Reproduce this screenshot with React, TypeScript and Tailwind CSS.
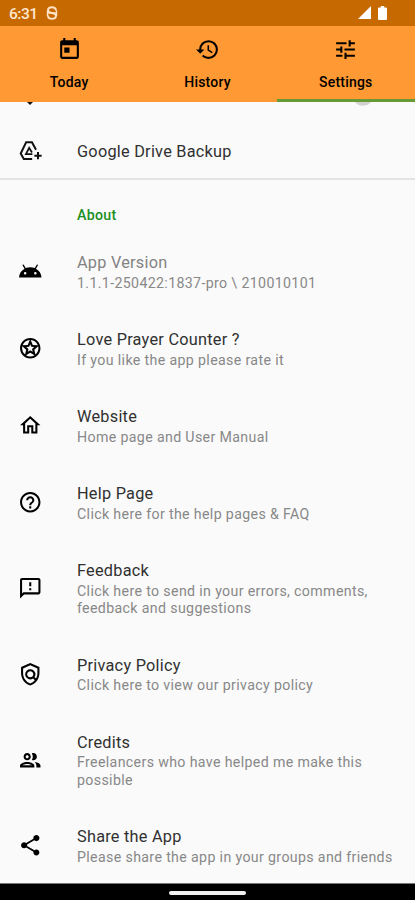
import type { IconType } from 'react-icons';
import {
  MdAndroid,
  MdHelpOutline,
  MdHistory,
  MdOutlineFeedback,
  MdOutlineGroup,
  MdOutlineHome,
  MdOutlinePolicy,
  MdOutlineStars,
  MdShare,
  MdToday,
  MdTune,
} from 'react-icons/md';

type Tab = {
  label: string;
  icon: IconType;
  active?: boolean;
};

type Preference = {
  title: string;
  summary: string[];
  icon: IconType;
  disabled?: boolean;
};

const tabs: Tab[] = [
  { label: 'Today', icon: MdToday },
  { label: 'History', icon: MdHistory },
  { label: 'Settings', icon: MdTune, active: true },
];

const aboutItems: Preference[] = [
  { title: 'App Version', summary: ['1.1.1-250422:1837-pro \\ 210010101'], icon: MdAndroid, disabled: true },
  { title: 'Love Prayer Counter ?', summary: ['If you like the app please rate it'], icon: MdOutlineStars },
  { title: 'Website', summary: ['Home page and User Manual'], icon: MdOutlineHome },
  { title: 'Help Page', summary: ['Click here for the help pages & FAQ'], icon: MdHelpOutline },
  {
    title: 'Feedback',
    summary: ['Click here to send in your errors, comments,', 'feedback and suggestions'],
    icon: MdOutlineFeedback,
  },
  { title: 'Privacy Policy', summary: ['Click here to view our privacy policy'], icon: MdOutlinePolicy },
  { title: 'Credits', summary: ['Freelancers who have helped me make this', 'possible'], icon: MdOutlineGroup },
  { title: 'Share the App', summary: ['Please share the app in your groups and friends'], icon: MdShare },
];

function StatusBar() {
  return (
    <div className="flex h-[25.5px] shrink-0 items-center bg-[#c66900] pl-[9px] pr-[28px] text-white">
      <span className="mt-[3px] w-[28px] text-[15.5px] font-medium leading-none tracking-[-0.5px] text-[#ffe6cf]">
        6:31
      </span>
      <svg className="ml-[9px] mt-px h-[14px] w-[12px]" viewBox="0 0 12 14" fill="none" stroke="#ffe2c4" strokeWidth="2">
        <path d="M10 4.6C10 2.3 8.3 1.3 6 1.3S2 2.3 2 4.3 4 6.6 6 7s4 .8 4 2.700-1.700 3-4 3-4-1-4-3.300" />
        <path d="M1 7h10M1.5 4.5v5.500M10.500 4.500v5.500" strokeWidth="1.4" />
      </svg>
      <div className="ml-auto flex items-center gap-[7px]">
        <svg className="h-[13px] w-[13px]" viewBox="0 0 13 13" fill="currentColor">
          <path d="M13 0v13H0z" />
        </svg>
        <svg className="h-[14px] w-[9px]" viewBox="0 0 9 14" fill="currentColor">
          <path d="M2.8 0h3.4v1.4h1.9c.5 0 .9.4.9.9v10.8c0 .5-.4.9-.9.9H.9c-.5 0-.9-.4-.9-.9V2.3c0-.5.4-.9.9-.9h1.9z" />
        </svg>
      </div>
    </div>
  );
}

function TabBar() {
  return (
    <div className="grid h-[76.5px] shrink-0 grid-cols-3 bg-[#ff9933]">
      {tabs.map(({ label, icon: Icon, active }) => (
        <div
          key={label}
          className={`flex flex-col items-center border-b-[3px] pt-[11px] text-black ${
            active ? 'border-[#679a36]' : 'border-transparent'
          }`}
        >
          <Icon className="h-[25px] w-[25px]" />
          <span className="mt-[11px] text-[14px] font-medium leading-[18px] tracking-[0.2px]">{label}</span>
        </div>
      ))}
    </div>
  );
}

function DriveBackupIcon() {
  return (
    <svg className="h-[25px] w-[25px]" viewBox="0 0 24 24" fill="none" stroke="#111" strokeWidth="1.9">
      <path d="M17.3 10.4 13.4 3.2H7.8L2.6 13.9l3 5.4h8" />
      <path d="M13.8 14.6H7.6l3.1-6.2 2.7 4.6" strokeWidth="1.7" />
      <path d="M19.2 12.5v7M15.7 16h7" />
    </svg>
  );
}

function PreferenceRow({ title, summary, icon: Icon, disabled }: Preference) {
  return (
    <div className="flex items-center py-[19px]">
      <div className="w-[77px] shrink-0 pl-[18px]">
        <Icon className="h-[24.5px] w-[24.5px] text-black" />
      </div>
      <div className="-mb-px">
        <div
          className={`mb-px text-[16.3px] leading-[21.5px] tracking-[0.25px] ${
            disabled ? 'text-[#838383]' : 'text-[#303030]'
          }`}
        >
          {title}
        </div>
        {summary.map((line) => (
          <div key={line} className="whitespace-nowrap text-[14.2px] leading-[17.5px] tracking-[0.35px] text-[#888]">
            {line}
          </div>
        ))}
      </div>
    </div>
  );
}

export default function App() {
  return (
    <div className="flex h-[900px] w-[415px] flex-col overflow-hidden bg-[#fafafa] font-['Roboto',sans-serif]">
      <StatusBar />
      <TabBar />

      {/* bottom edge of the row that is scrolled under the tabs */}
      <div className="flex h-[5px] shrink-0 items-start justify-between overflow-hidden pl-[27px] pr-[44px]">
        <svg className="h-[4px] w-[6px]" viewBox="0 0 6 4">
          <path d="M0 0h6L3 3z" fill="#111" />
        </svg>
        <svg className="h-[5px] w-[16px]" viewBox="0 0 16 5">
          <path d="M0 0h16c-2 2.7-5 3.8-8 3.8S2 2.7 0 0z" fill="#d2d2d2" />
        </svg>
      </div>

      <div className="flex h-[73px] shrink-0 items-center border-b-2 border-[#e3e3e3] pt-[18px]">
        <div className="w-[77px] pl-[18px]">
          <DriveBackupIcon />
        </div>
        <span className="pt-px text-[16.3px] tracking-[0.25px] text-[#303030]">Google Drive Backup</span>
      </div>

      <div className="flex h-[53px] shrink-0 items-end pb-[8px] pl-[77px]">
        <span className="text-[14.2px] font-medium leading-[20px] tracking-[0.3px] text-[#1a8f1f]">About</span>
      </div>

      <div className="min-h-0 flex-1 overflow-hidden">
        {aboutItems.map((item) => (
          <PreferenceRow key={item.title} {...item} />
        ))}
      </div>

      <div className="flex h-[17px] shrink-0 items-center justify-center border-t border-[#777] bg-black pt-px">
        <div className="h-[4px] w-[77px] rounded-full bg-[#f2f2f2]" />
      </div>
    </div>
  );
}
